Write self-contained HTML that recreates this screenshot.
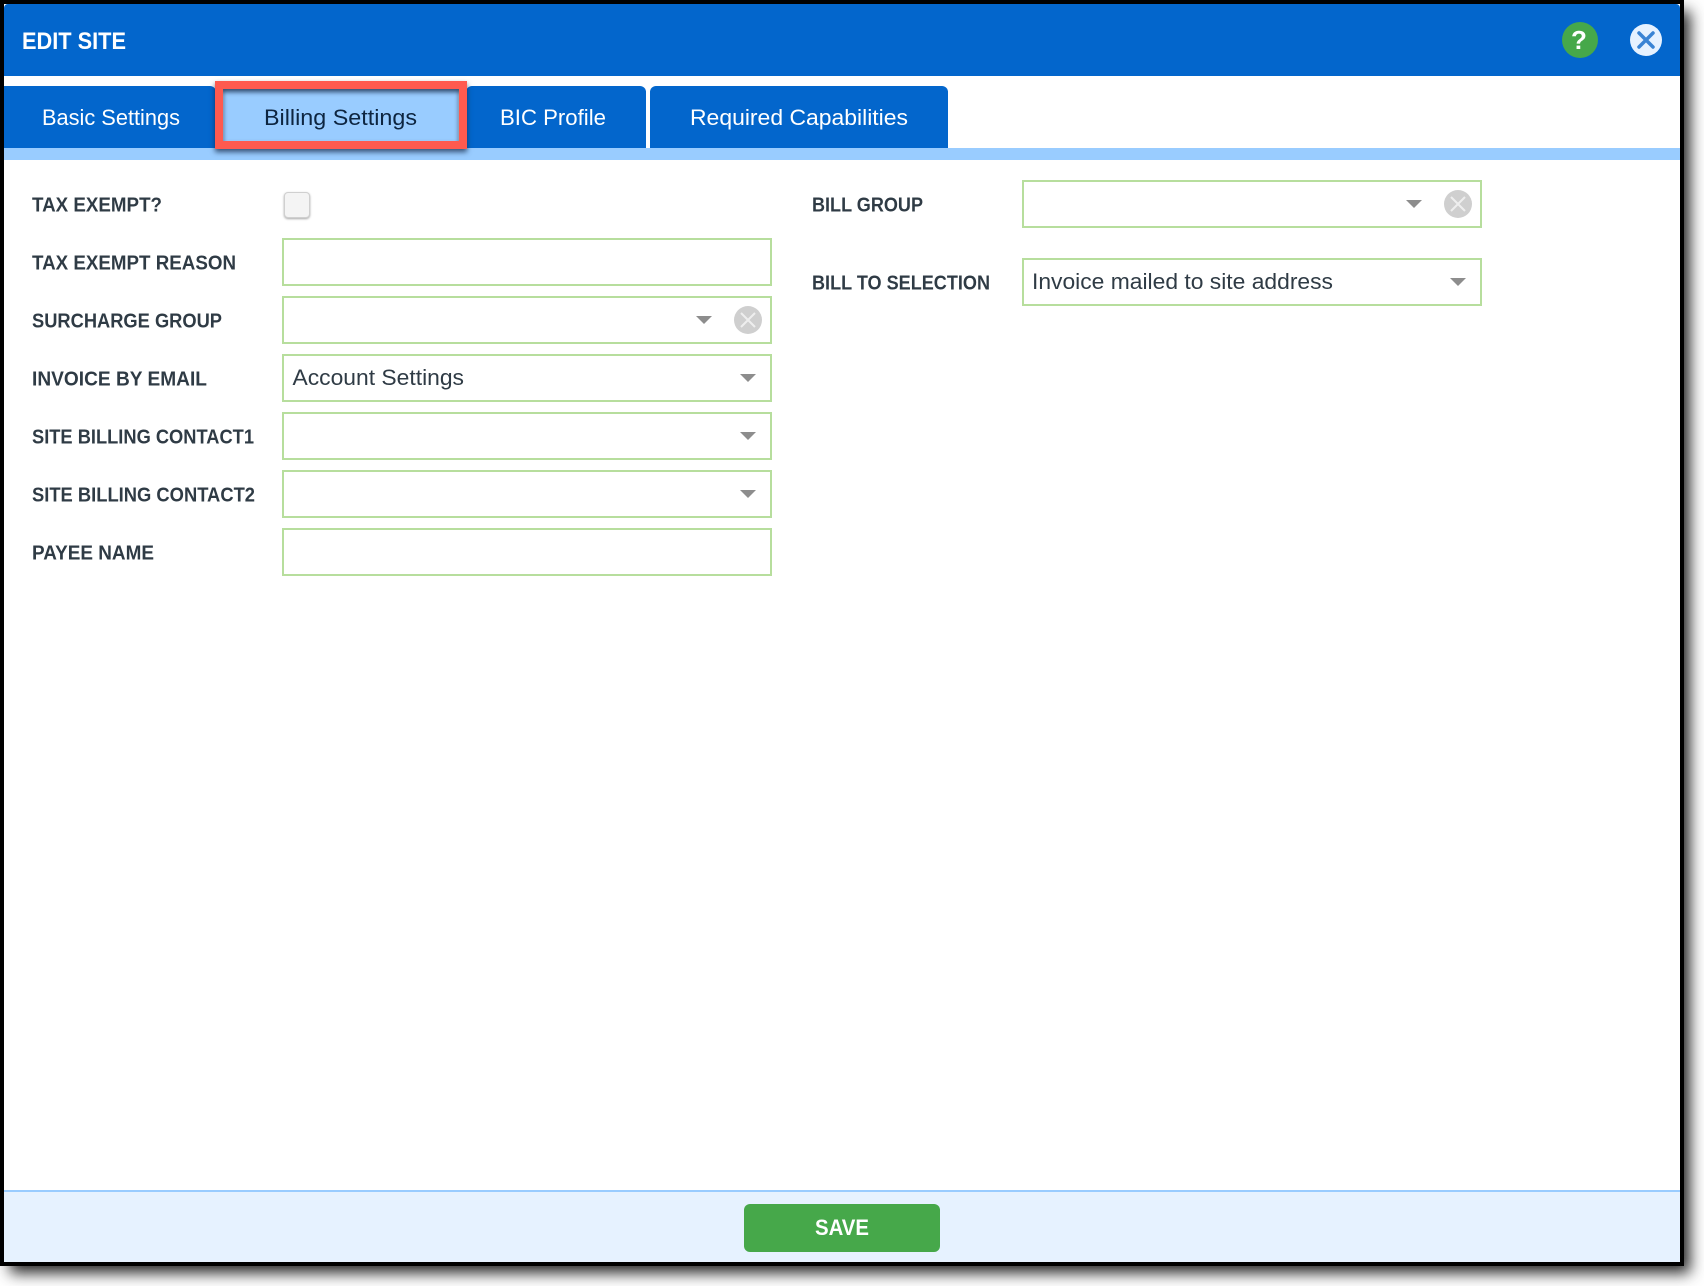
<!DOCTYPE html>
<html lang="en"><head><meta charset="utf-8"><title>Edit Site</title>
<style>
html,body{margin:0;padding:0;background:#fff;width:1704px;height:1286px;overflow:hidden;font-family:"Liberation Sans",sans-serif}
.abs,.frame div{position:absolute}
.frame{position:absolute;left:0;top:0;width:1676px;height:1258px;border:4px solid #000;background:#fff;box-shadow:8px 9px 14px -2px rgba(0,0,0,.85)}
.hdr{left:0;top:0;width:1676px;height:72px;background:#0366cc;border-radius:4px 4px 0 0}
.tab{top:82px;height:62px;background:#0366cc;border-radius:6px 6px 0 0}
.strip{left:0;top:144px;width:1676px;height:12px;background:#99ccff}
.in{box-sizing:border-box;border:2px solid #b7de9d;background:#fff;height:48px}
.foot{left:0;top:1186px;width:1676px;height:72px;box-sizing:border-box;background:#e6f2ff;border-top:2px solid #99ccff}
.save{left:740px;top:1200px;width:196px;height:48px;background:#46a84a;border-radius:6px}
.cb{left:280px;top:188px;width:26px;height:26px;box-sizing:border-box;border:1px solid #d0d0d0;border-radius:4px;background:#f4f4f4;box-shadow:0 1px 2px rgba(0,0,0,.35)}
.hl{position:absolute;left:215px;top:81px;width:236px;height:52px;border:8px solid #ff5a4f;background:#99ccff;box-shadow:0 3px 5px rgba(20,40,70,.75),inset 0 3px 5px rgba(20,40,70,.8),inset 1px 0 1px rgba(255,255,255,.4),inset -1px 0 1px rgba(255,255,255,.5)}
svg{position:absolute;left:0;top:0}
.l{font:bold 20px "Liberation Sans",sans-serif;fill:#2f3b45}
.t{font:22px "Liberation Sans",sans-serif;fill:#fff}
.v{font:22px "Liberation Sans",sans-serif;fill:#2f3b45}
</style></head><body>
<div class="frame">
<div class="hdr"></div>
<div class="tab" style="left:0;width:212px;border-radius:0 6px 0 0"></div>
<div class="tab" style="left:212px;width:250px"></div>
<div class="tab" style="left:462px;width:180px"></div>
<div class="tab" style="left:646px;width:298px"></div>
<div class="strip"></div>
<div class="cb"></div>
<div class="in" style="left:278px;top:234px;width:490px"></div>
<div class="in" style="left:278px;top:292px;width:490px"></div>
<div class="in" style="left:278px;top:350px;width:490px"></div>
<div class="in" style="left:278px;top:408px;width:490px"></div>
<div class="in" style="left:278px;top:466px;width:490px"></div>
<div class="in" style="left:278px;top:524px;width:490px"></div>
<div class="in" style="left:1018px;top:176px;width:460px"></div>
<div class="in" style="left:1018px;top:254px;width:460px"></div>
<div class="foot"></div>
<div class="save"></div>
</div>
<div class="hl"></div>
<svg width="1704" height="1286" viewBox="0 0 1704 1286">
<text x="22" y="49" textLength="104" lengthAdjust="spacingAndGlyphs" style="font:bold 24px 'Liberation Sans',sans-serif;fill:#fff">EDIT SITE</text>
<text class="t" x="42" y="125" textLength="138" lengthAdjust="spacingAndGlyphs">Basic Settings</text>
<text class="t" x="264" y="125" textLength="153" lengthAdjust="spacingAndGlyphs" style="fill:#0d2540">Billing Settings</text>
<text class="t" x="500" y="125" textLength="106" lengthAdjust="spacingAndGlyphs">BIC Profile</text>
<text class="t" x="690" y="125" textLength="218" lengthAdjust="spacingAndGlyphs">Required Capabilities</text>

<text class="l" x="32" y="211.5" textLength="130" lengthAdjust="spacingAndGlyphs">TAX EXEMPT?</text>
<text class="l" x="32" y="269.5" textLength="204" lengthAdjust="spacingAndGlyphs">TAX EXEMPT REASON</text>
<text class="l" x="32" y="327.5" textLength="190" lengthAdjust="spacingAndGlyphs">SURCHARGE GROUP</text>
<text class="l" x="32" y="385.5" textLength="175" lengthAdjust="spacingAndGlyphs">INVOICE BY EMAIL</text>
<text class="l" x="32" y="443.5" textLength="222" lengthAdjust="spacingAndGlyphs">SITE BILLING CONTACT1</text>
<text class="l" x="32" y="501.5" textLength="223" lengthAdjust="spacingAndGlyphs">SITE BILLING CONTACT2</text>
<text class="l" x="32" y="559.5" textLength="122" lengthAdjust="spacingAndGlyphs">PAYEE NAME</text>
<text class="l" x="812" y="211.5" textLength="111" lengthAdjust="spacingAndGlyphs">BILL GROUP</text>
<text class="l" x="812" y="289.5" textLength="178" lengthAdjust="spacingAndGlyphs">BILL TO SELECTION</text>
<text class="v" x="292.5" y="385" textLength="171.5" lengthAdjust="spacingAndGlyphs">Account Settings</text>
<text class="v" x="1032" y="289" textLength="301" lengthAdjust="spacingAndGlyphs">Invoice mailed to site address</text>
<text x="815" y="1235" textLength="54" lengthAdjust="spacingAndGlyphs" style="font:bold 22px 'Liberation Sans',sans-serif;fill:#fff">SAVE</text>

<circle cx="1580" cy="40" r="18" fill="#46a84a"/>
<text x="1579" y="49" text-anchor="middle" style="font:bold 26px 'Liberation Sans',sans-serif;fill:#fff">?</text>
<circle cx="1646" cy="40" r="16" fill="#e6f2ff"/>
<path d="M1639 33L1653 47M1653 33L1639 47" stroke="#3a84d4" stroke-width="3.5" stroke-linecap="round"/>

<g fill="#8d8d8d">
<path d="M696 316h16l-8 8z"/>
<path d="M740 374h16l-8 8z"/>
<path d="M740 432h16l-8 8z"/>
<path d="M740 490h16l-8 8z"/>
<path d="M1406 200h16l-8 8z"/>
<path d="M1450 278h16l-8 8z"/>
</g>
<g>
<circle cx="748" cy="320" r="14" fill="#cfcfcf"/>
<path d="M741 313L755 327M755 313L741 327" stroke="#eee" stroke-width="2"/>
<circle cx="1458" cy="204" r="14" fill="#cfcfcf"/>
<path d="M1451 197L1465 211M1465 197L1451 211" stroke="#eee" stroke-width="2"/>
</g>
</svg>
</body></html>
